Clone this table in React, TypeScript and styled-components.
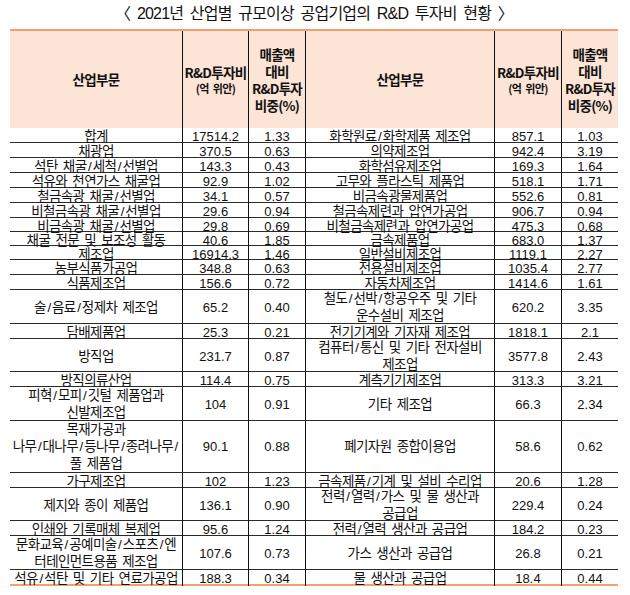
import React from 'react';
import styled, { createGlobalStyle } from 'styled-components';

const GlobalStyle = createGlobalStyle`
  html, body { margin: 0; padding: 0; background: #ffffff; }
  body {
    font-family: "Liberation Sans", "Noto Sans CJK KR", sans-serif;
    color: #111111;
  }
`;

const COLS = '172px 66px 57px 189px 67px 57px';
const ORANGE = '#f3a06c';

const Page = styled.div`
  width: 630px;
  padding: 0 12px 0 10px;
  box-sizing: border-box;
`;

const Title = styled.div`
  height: 29px;
  line-height: 27px;
  text-align: center;
  font-size: 16px;
  letter-spacing: -0.8px;
  word-spacing: 3px;
  color: #111;
`;

const Table = styled.div`
  width: 608px;
  border-top: 2px solid ${ORANGE};
  border-bottom: 2px solid ${ORANGE};
`;

const Row = styled.div<{ $h: number; $head?: boolean; $first?: boolean }>`
  display: grid;
  grid-template-columns: ${COLS};
  height: ${(p) => p.$h}px;
  box-sizing: border-box;
  background: ${(p) => (p.$head ? '#fce4d6' : 'transparent')};
  border-top: ${(p) => (p.$head || p.$first ? 'none' : '1px solid #2a2a2a')};
`;

const Cell = styled.div<{ $lead?: boolean }>`
  display: flex;
  align-items: center;
  justify-content: center;
  text-align: center;
  min-width: 0;
  line-height: 17px;
  border-left: ${(p) => (p.$lead ? 'none' : '1px solid #111')};
`;

const HeadCell = styled(Cell)`
  font-family: "Noto Sans CJK KR", "Liberation Sans", sans-serif;
  font-weight: 700;
  font-size: 13.5px;
  letter-spacing: -0.7px;
  flex-direction: column;
  white-space: nowrap;
`;

const HeadSub = styled.span`
  font-size: 11px;
  line-height: 14px;
  letter-spacing: -0.6px;
  word-spacing: 2px;
`;

const NameCell = styled(Cell)`
  font-size: 13.5px;
  letter-spacing: -0.6px;
  word-spacing: 2px;
`;

const NameText = styled.span`
  display: block;
  white-space: pre;
`;

const Slash = styled.span`
  padding: 0 1.5px;
`;

const NumCell = styled(Cell)`
  font-size: 13px;
`;

type Side = [string, string, string];
type RowData = { h: number; l: Side; r: Side };

const rows: RowData[] = [
  { h: 14, l: ['합계', '17514.2', '1.33'], r: ['화학원료/화학제품 제조업', '857.1', '1.03'] },
  { h: 15, l: ['채광업', '370.5', '0.63'], r: ['의약제조업', '942.4', '3.19'] },
  { h: 15, l: ['석탄 채굴/세척/선별업', '143.3', '0.43'], r: ['화학섬유제조업', '169.3', '1.64'] },
  { h: 15, l: ['석유와 천연가스 채굴업', '92.9', '1.02'], r: ['고무와 플라스틱 제품업', '518.1', '1.71'] },
  { h: 15, l: ['철금속광 채굴/선별업', '34.1', '0.57'], r: ['비금속광물제품업', '552.6', '0.81'] },
  { h: 15, l: ['비철금속광 채굴/선별업', '29.6', '0.94'], r: ['철금속제련과 압연가공업', '906.7', '0.94'] },
  { h: 14, l: ['비금속광 채굴/선별업', '29.8', '0.69'], r: ['비철금속제련과 압연가공업', '475.3', '0.68'] },
  { h: 14, l: ['채굴 전문 및 보조성 활동', '40.6', '1.85'], r: ['금속제품업', '683.0', '1.37'] },
  { h: 14, l: ['제조업', '16914.3', '1.46'], r: ['일반설비제조업', '1119.1', '2.27'] },
  { h: 15, l: ['농부식품가공업', '348.8', '0.63'], r: ['전용설비제조업', '1035.4', '2.77'] },
  { h: 15, l: ['식품제조업', '156.6', '0.72'], r: ['자동차제조업', '1414.6', '1.61'] },
  { h: 34, l: ['술/음료/정제차 제조업', '65.2', '0.40'], r: ['철도/선박/항공우주 및 기타\n운수설비 제조업', '620.2', '3.35'] },
  { h: 15, l: ['담배제품업', '25.3', '0.21'], r: ['전기기계와 기자재 제조업', '1818.1', '2.1'] },
  { h: 33, l: ['방직업', '231.7', '0.87'], r: ['컴퓨터/통신 및 기타 전자설비\n제조업', '3577.8', '2.43'] },
  { h: 15, l: ['방직의류산업', '114.4', '0.75'], r: ['계측기기제조업', '313.3', '3.21'] },
  { h: 34, l: ['피혁/모피/깃털 제품업과\n신발제조업', '104', '0.91'], r: ['기타 제조업', '66.3', '2.34'] },
  { h: 52, l: ['목재가공과\n나무/대나무/등나무/종려나무/\n풀 제품업', '90.1', '0.88'], r: ['폐기자원 종합이용업', '58.6', '0.62'] },
  { h: 15, l: ['가구제조업', '102', '1.23'], r: ['금속제품/기계 및 설비 수리업', '20.6', '1.28'] },
  { h: 33, l: ['제지와 종이 제품업', '136.1', '0.90'], r: ['전력/열력/가스 및 물 생산과\n공급업', '229.4', '0.24'] },
  { h: 15, l: ['인쇄와 기록매체 복제업', '95.6', '1.24'], r: ['전력/열력 생산과 공급업', '184.2', '0.23'] },
  { h: 34, l: ['문화교육/공예미술/스포츠/엔\n터테인먼트용품 제조업', '107.6', '0.73'], r: ['가스 생산과 공급업', '26.8', '0.21'] },
  { h: 15, l: ['석유/석탄 및 기타 연료가공업', '188.3', '0.34'], r: ['물 생산과 공급업', '18.4', '0.44'] },
];

function Name({ text }: { text: string }) {
  const parts = text.split('/');
  return (
    <NameText>
      {parts.map((p, i) => (
        <React.Fragment key={i}>
          {p}
          {i < parts.length - 1 && <Slash>/</Slash>}
        </React.Fragment>
      ))}
    </NameText>
  );
}

function HeaderGroup({ lead }: { lead?: boolean }) {
  return (
    <>
      <HeadCell $lead={lead}>산업부문</HeadCell>
      <HeadCell>
        <span>R&amp;D투자비</span>
        <HeadSub>(억 위안)</HeadSub>
      </HeadCell>
      <HeadCell>
        <span>매출액</span>
        <span>대비</span>
        <span>R&amp;D투자</span>
        <span>비중(%)</span>
      </HeadCell>
    </>
  );
}

export default function App() {
  return (
    <Page>
      <GlobalStyle />
      <Title>〈 2021년 산업별 규모이상 공업기업의 R&amp;D 투자비 현황 〉</Title>
      <Table>
        <Row $h={97} $head>
          <HeaderGroup lead />
          <HeaderGroup />
        </Row>
        {rows.map((r, i) => (
          <Row key={i} $h={r.h} $first={i === 0}>
            <NameCell $lead>
              <Name text={r.l[0]} />
            </NameCell>
            <NumCell>{r.l[1]}</NumCell>
            <NumCell>{r.l[2]}</NumCell>
            <NameCell>
              <Name text={r.r[0]} />
            </NameCell>
            <NumCell>{r.r[1]}</NumCell>
            <NumCell>{r.r[2]}</NumCell>
          </Row>
        ))}
      </Table>
    </Page>
  );
}
